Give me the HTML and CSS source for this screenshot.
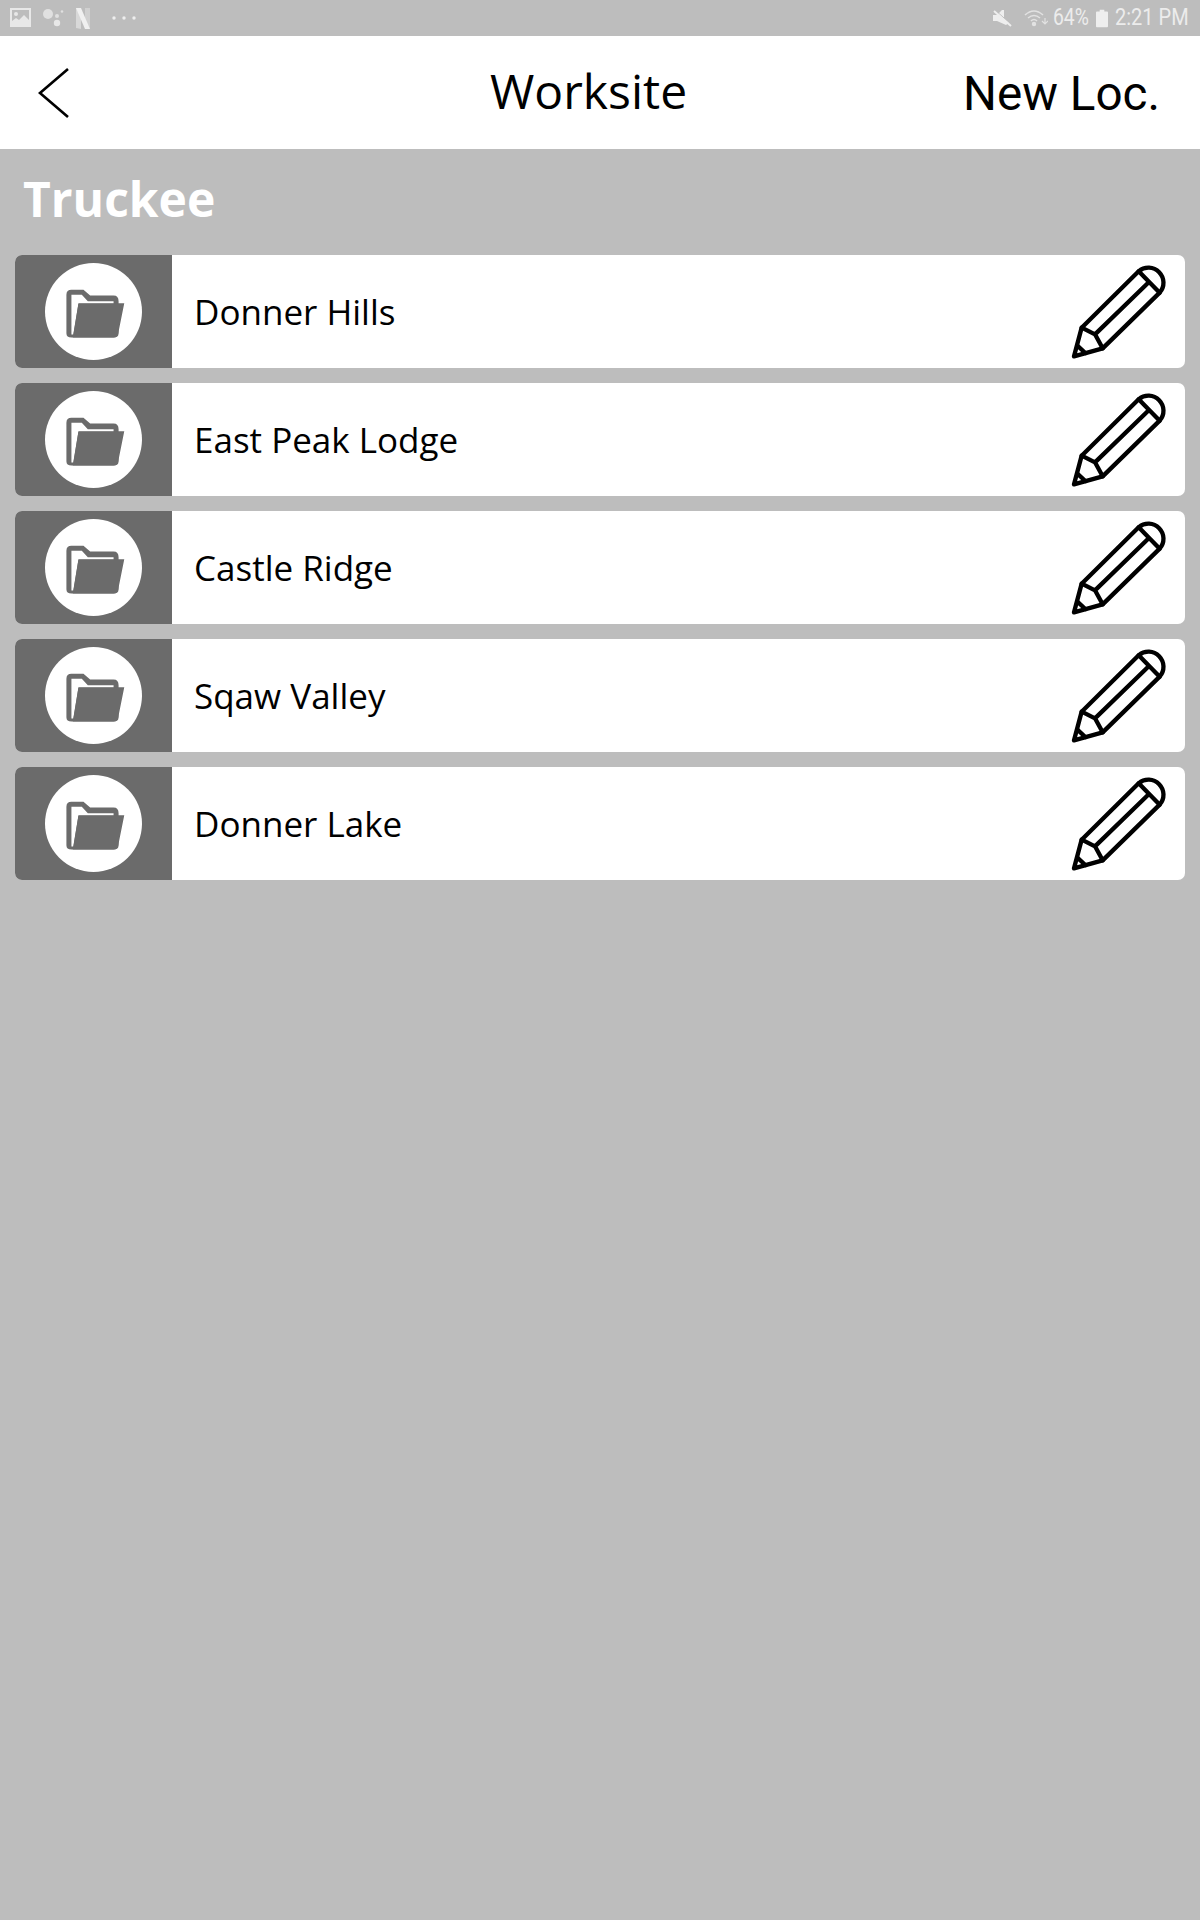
FILE: index.html
```html
<!DOCTYPE html>
<html lang="en">
<head>
<meta charset="utf-8">
<title>Worksite</title>
<link rel="stylesheet" href="styles.css">
</head>
<body>
<svg class="defs" width="0" height="0" aria-hidden="true">
  <symbol id="folder" viewBox="135 70 290 290">
    <path fill="#6b6b6b" d="M214 150H250L270 167H340Q355 167 355 184V280Q355 293 340 293H214Q199 293 199 280V165Q199 150 214 150Z"/>
    <path fill="#fff" d="M214 165H245L263 184H340V192H235L220 284H214Z"/>
    <path fill="#6b6b6b" d="M235 190H372L354 280Q352 293 340 293H218Z"/>
  </symbol>
  <symbol id="pencil" viewBox="60 35 300 300">
    <g fill="none" stroke="#000" stroke-width="13" stroke-linejoin="round" stroke-linecap="round">
      <path d="M72 318L95 232L266 63A45 45 0 0 1 329 127L158 294Z"/>
      <path d="M266 63L329 127M95 232L135 252L158 294M135 252L297 95M82 286L106 308"/>
    </g>
  </symbol>
</svg>
<div class="status">
  <div class="status-left">
    <svg class="ic-img" viewBox="0 0 22 20"><path fill="#e8e8e8" d="M0 0H21V19H0Z"/><path fill="#bdbdbd" d="M2 2H19V12L14 7L9 12L6 10L2 13Z"/><circle cx="6" cy="6" r="2" fill="#e8e8e8"/></svg>
    <svg class="ic-dots" viewBox="0 0 22 20"><circle cx="6" cy="6" r="5" fill="#e0e0e0"/><circle cx="15" cy="8" r="2" fill="#e0e0e0"/><circle cx="20" cy="3.5" r="1.3" fill="#e0e0e0"/><circle cx="15" cy="15" r="3.2" fill="#e8e8e8"/></svg>
    <svg class="ic-n" viewBox="0 0 14 21"><path fill="#d8d8d8" d="M0 0H5V21L0 20Z"/><path fill="#d0d0d0" d="M9 0H14V21L9 20Z"/><path fill="#f0f0f0" d="M0 0H5L14 21H9Z"/></svg>
    <svg class="ic-more" viewBox="0 0 24 4"><circle cx="2" cy="2" r="1.7" fill="#eee"/><circle cx="12" cy="2" r="1.7" fill="#eee"/><circle cx="22" cy="2" r="1.7" fill="#eee"/></svg>
  </div>
  <div class="status-right">
    <svg class="ic-mute" viewBox="0 0 20 18"><path fill="#eee" d="M1 6H5L10 1H12V9L17 14L14 16L5 12H1Z"/><path stroke="#bdbdbd" stroke-width="1" d="M4 2L19 15"/><path stroke="#eee" stroke-width="2" d="M2 2L19 17"/></svg>
    <svg class="ic-wifi" viewBox="0 0 24 18" fill="none" stroke="#e2e2e2" stroke-width="1.6"><path d="M1 6Q10-2 19 6M4 9Q10 4 16 9M7 12Q10 9 13 12"/><circle cx="10" cy="15" r="1.4" fill="#e2e2e2"/><path d="M21 9V14M18 12L21 15L24 12" stroke-width="1.2"/></svg>
    <span class="pct">64%</span>
    <svg class="ic-batt" viewBox="0 0 13 19"><path fill="#eee" d="M4 0H9V2H12Q13 2 13 3V18Q13 19 12 19H1Q0 19 0 18V3Q0 2 1 2H4Z"/></svg>
    <span class="time">2:21 PM</span>
  </div>
</div>
<header class="topbar">
  <svg class="back" viewBox="0 0 32 52"><path d="M30 2L2 26L30 50" fill="none" stroke="#000" stroke-width="2.6"/></svg>
  <h1 class="title">Worksite</h1>
  <span class="newloc">New Loc.</span>
</header>
<h2 class="region">Truckee</h2>
<ul class="list">
  <li class="row"><span class="thumb"><span class="disc"><svg class="folder"><use href="#folder"/></svg></span></span><span class="name">Donner Hills</span><svg class="pencil"><use href="#pencil"/></svg></li>
  <li class="row"><span class="thumb"><span class="disc"><svg class="folder"><use href="#folder"/></svg></span></span><span class="name">East Peak Lodge</span><svg class="pencil"><use href="#pencil"/></svg></li>
  <li class="row"><span class="thumb"><span class="disc"><svg class="folder"><use href="#folder"/></svg></span></span><span class="name">Castle Ridge</span><svg class="pencil"><use href="#pencil"/></svg></li>
  <li class="row"><span class="thumb"><span class="disc"><svg class="folder"><use href="#folder"/></svg></span></span><span class="name">Sqaw Valley</span><svg class="pencil"><use href="#pencil"/></svg></li>
  <li class="row"><span class="thumb"><span class="disc"><svg class="folder"><use href="#folder"/></svg></span></span><span class="name">Donner Lake</span><svg class="pencil"><use href="#pencil"/></svg></li>
</ul>
</body>
</html>
```
FILE: styles.css
```css
* { box-sizing: border-box; }
html, body { margin: 0; padding: 0; }
body {
  width: 1200px;
  height: 1920px;
  overflow: hidden;
  background: #bdbdbd;
  font-family: "Open Sans", sans-serif;
}
.defs { position: absolute; }
.status {
  height: 36px;
  display: flex;
  justify-content: space-between;
  align-items: center;
  padding: 0 12px 0 10px;
}
.status-left, .status-right { display: flex; align-items: center; }
.ic-img { width: 22px; height: 20px; }
.ic-dots { width: 22px; height: 20px; margin-left: 10px; }
.ic-n { width: 14px; height: 21px; margin-left: 12px; }
.ic-more { width: 24px; height: 4px; margin-left: 22px; }
.ic-mute { width: 20px; height: 18px; }
.ic-wifi { width: 24px; height: 18px; margin-left: 12px; }
.pct, .time {
  font-family: Roboto, sans-serif;
  font-size: 23px;
  line-height: 36px;
  color: #ececec;
  white-space: nowrap;
  transform-origin: left center;
}
.pct { width: 36px; margin-left: 5px; transform: scaleX(.84); }
.ic-batt { width: 12px; height: 19px; margin-left: 7px; }
.time { width: 73px; margin-left: 7px; transform: scaleX(.87); }

.topbar {
  height: 113px;
  background: #fff;
  display: grid;
  grid-template-columns: 490px auto 1fr;
  align-items: center;
  position: relative;
}
.back {
  width: 32px;
  height: 52px;
  margin-left: 38px;
}
.title {
  margin: 0 0 3px;
  font-size: 48px;
  font-weight: 400;
  line-height: 1;
  color: #000;
}
.newloc {
  justify-self: end;
  padding: 2px 40px 0 0;
  font-family: Roboto, sans-serif;
  font-size: 47.6px;
  color: #000;
}
.region {
  margin: 0;
  padding: 19px 0 0 23px;
  height: 106px;
  font-size: 48px;
  font-weight: 700;
  line-height: 62px;
  color: #fff;
}
.list {
  list-style: none;
  margin: 0;
  padding: 0 15px;
  display: flex;
  flex-direction: column;
  gap: 15px;
}
.row {
  height: 113px;
  background: #fff;
  border-radius: 7px;
  overflow: hidden;
  display: flex;
  align-items: center;
}
.thumb {
  width: 157px;
  height: 100%;
  background: #6b6b6b;
  display: flex;
  align-items: center;
  justify-content: center;
  flex: none;
}
.disc {
  width: 97px;
  height: 97px;
  border-radius: 50%;
  background: #fff;
  display: block;
}
.folder { width: 97px; height: 97px; display: block; }
.name {
  margin-left: 22px;
  font-size: 35px;
  color: #000;
  flex: 1;
}
.pencil {
  width: 100px;
  height: 100px;
  margin-right: 15px;
  flex: none;
}
```
